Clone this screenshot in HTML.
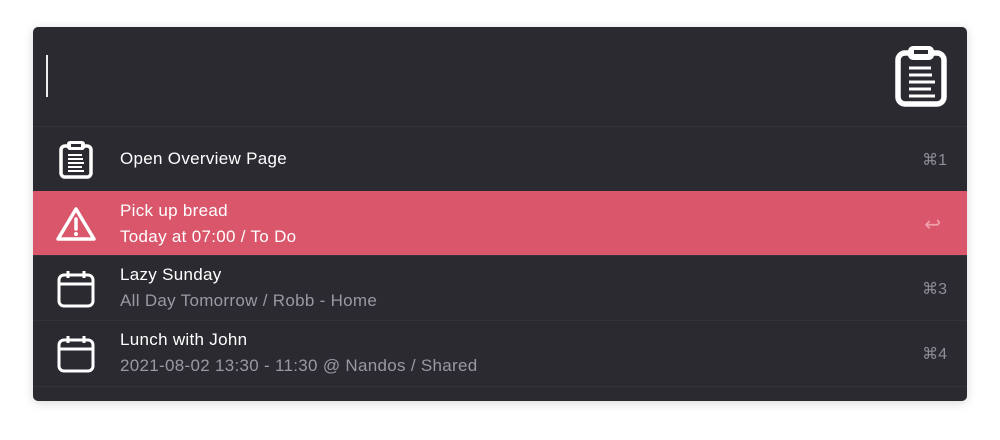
<!DOCTYPE html><html><head><style>
body{margin:0;width:1000px;height:440px;background:#fff;font-family:"Liberation Sans",sans-serif;position:relative;overflow:hidden}
.p{position:absolute;left:33px;top:27px;width:934px;height:374px;background:#2b2a30;border-radius:5px;overflow:hidden;box-shadow:0 2px 10px rgba(0,0,0,.15)}
.cur{position:absolute;left:13px;top:28px;width:2px;height:42px;background:#eee}
.r{position:absolute;left:0;width:934px;height:64px;border-top:1px solid #34333a}
.r.s{background:#d9566b;border-top-color:#d9566b}
.ic{position:absolute;left:22px;top:14px}
.t{position:absolute;left:87px;color:#fff;font-size:17px;letter-spacing:0.3px}
.sub{color:#9a98a3}
.s .sub{color:#fff}
.k{position:absolute;right:20px;top:23px;color:#8f8d98;font-size:16px}
</style></head><body><div class="p">
<div class="cur"></div>
<svg style="position:absolute;left:862px;top:18px" width="52" height="62" viewBox="0 0 52 62"><rect x="3" y="8" width="46" height="51" rx="7" fill="none" stroke="#fff" stroke-width="5.5"/><rect x="13" y="1" width="26" height="14" rx="5" fill="#fff"/><rect x="19" y="5" width="14" height="4" fill="#2b2a30"/><g stroke="#fff" stroke-width="3"><line x1="14" y1="23" x2="36" y2="23"/><line x1="14" y1="30" x2="37" y2="30"/><line x1="14" y1="37" x2="40" y2="37"/><line x1="14" y1="44" x2="36" y2="44"/><line x1="14" y1="51" x2="40" y2="51"/></g></svg>
<div class="r" style="top:99px;height:65px"><svg class="ic" style="left:26px;top:14px" width="34" height="38" viewBox="0 0 34 38"><rect x="2" y="5" width="30" height="31" rx="4" fill="none" stroke="#fff" stroke-width="3.5"/><rect x="8" y="0" width="18" height="9" rx="3" fill="#fff"/><rect x="12" y="3" width="10" height="3" fill="#2b2a30"/><g stroke="#fff" stroke-width="2"><line x1="9" y1="14" x2="23" y2="14"/><line x1="9" y1="18" x2="24" y2="18"/><line x1="9" y1="22" x2="25" y2="22"/><line x1="9" y1="26" x2="23" y2="26"/><line x1="9" y1="30" x2="25" y2="30"/></g></svg><div class="t" style="top:22px">Open Overview Page</div><div class="k" style="top:23px">⌘1</div></div>
<div class="r s" style="top:164px"><svg class="ic" width="42" height="36" viewBox="0 0 42 36"><path d="M21 3 L39 33 H3 Z" fill="none" stroke="#fff" stroke-width="3.5" stroke-linejoin="round"/><line x1="21" y1="13" x2="21" y2="23" stroke="#fff" stroke-width="3.5" stroke-linecap="round"/><circle cx="21" cy="28" r="2" fill="#fff"/></svg><div class="t" style="top:9px">Pick up bread</div><div class="t sub" style="top:35px">Today at 07:00 / To Do</div><div class="k" style="color:#f0a0ad;top:20px;font-size:20px;right:26px">↩</div></div>
<div class="r" style="top:228px;height:65px"><svg class="ic" style="left:24px;top:14px" width="38" height="38" viewBox="0 0 38 38"><rect x="2" y="5" width="34" height="31" rx="5" fill="none" stroke="#fff" stroke-width="3"/><line x1="2" y1="14" x2="36" y2="14" stroke="#fff" stroke-width="3"/><line x1="11" y1="1" x2="11" y2="8" stroke="#fff" stroke-width="3"/><line x1="27" y1="1" x2="27" y2="8" stroke="#fff" stroke-width="3"/></svg><div class="t" style="top:9px">Lazy Sunday</div><div class="t sub" style="top:35px">All Day Tomorrow / Robb - Home</div><div class="k">⌘3</div></div>
<div class="r" style="top:293px;height:65px;border-bottom:1px solid #34333a"><svg class="ic" style="left:24px;top:14px" width="38" height="38" viewBox="0 0 38 38"><rect x="2" y="5" width="34" height="31" rx="5" fill="none" stroke="#fff" stroke-width="3"/><line x1="2" y1="14" x2="36" y2="14" stroke="#fff" stroke-width="3"/><line x1="11" y1="1" x2="11" y2="8" stroke="#fff" stroke-width="3"/><line x1="27" y1="1" x2="27" y2="8" stroke="#fff" stroke-width="3"/></svg><div class="t" style="top:9px">Lunch with John</div><div class="t sub" style="top:35px">2021-08-02 13:30 - 11:30 @ Nandos / Shared</div><div class="k">⌘4</div></div>
</div></body></html>
